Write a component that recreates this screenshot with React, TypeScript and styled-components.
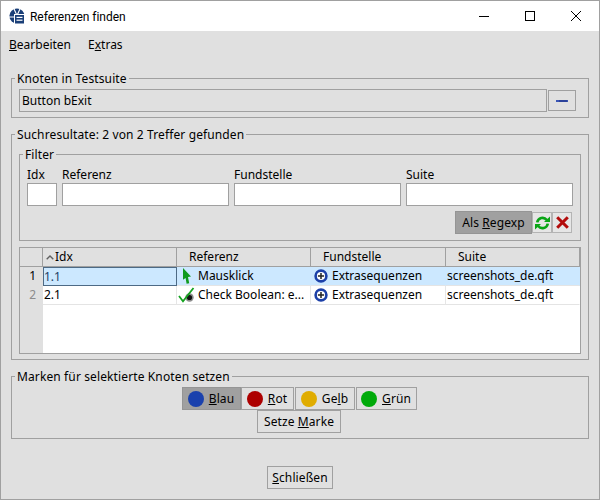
import React from "react";
import styled, { createGlobalStyle } from "styled-components";

const Global = createGlobalStyle`
  html, body { margin: 0; padding: 0; background: #e0e0e0; }
  * { box-sizing: border-box; }
  body { font-family: "Noto Sans", "Open Sans", sans-serif; font-size: 12px; color: #000; }
`;

const Window = styled.div`
  width: 600px;
  height: 500px;
  border: 1px solid #a0a0a0;
  background: #e0e0e0;
  display: flex;
  flex-direction: column;
  overflow: hidden;
`;
const TitleBar = styled.div`
  height: 30px;
  flex: none;
  background: #fff;
  display: flex;
  align-items: center;
  padding-left: 8px;
`;
const TitleText = styled.span`
  margin-left: 5px;
  flex: 1;
  line-height: 16px;
  margin-top: 1px;
  font-family: Roboto, "Noto Sans", sans-serif;
  font-size: 12px;
  letter-spacing: -0.05px;
`;
const WinButton = styled.div`
  width: 46px;
  height: 30px;
  display: flex;
  align-items: center;
  justify-content: center;
`;
const MenuBar = styled.div`
  height: 27px;
  flex: none;
  display: flex;
  align-items: center;
  gap: 17px;
  padding: 0 0 0 8px;
`;
const MenuItem = styled.span`
  line-height: 16px;
  margin-top: 1px;
`;
const Group = styled.fieldset<{ $mt: number; $pb: number; $pr: number; $nested?: boolean }>`
  margin: ${(p) => p.$mt}px ${(p) => (p.$nested ? 0 : 10)}px 0;
  min-width: 0;
  padding: 1px ${(p) => p.$pr}px ${(p) => p.$pb}px 7px;
  border: 1px solid #a0a0a0;
  flex: none;
`;
const Legend = styled.legend`
  margin-left: -4px;
  padding: 0 2px;
  height: 19px;
  line-height: 19px;
  letter-spacing: 0.12px;
`;
const NodeRow = styled.div`
  display: flex;
  align-items: center;
  gap: 1px;
`;
const NodeField = styled.div`
  flex: 1;
  height: 23px;
  border: 1px solid #a0a0a0;
  padding-left: 2px;
  line-height: 21px;
`;
const SmallButton = styled.div`
  width: 28px;
  height: 21px;
  border: 1px solid #a0a0a0;
  display: flex;
  align-items: center;
  justify-content: center;
`;
const FilterGrid = styled.div`
  display: grid;
  grid-template-columns: 30px 167px 167px 167px;
  grid-template-rows: 18px 23px;
  column-gap: 5px;
`;
const FieldLabel = styled.label`
  line-height: 20px;
`;
const TextInput = styled.div`
  border: 1px solid #a0a0a0;
  background: #fff;
`;
const FilterActions = styled.div`
  display: flex;
  justify-content: flex-end;
  align-items: center;
  margin: 5px 1px 0 0;
  height: 23px;
`;
const Toggle = styled.div<{ $w: number; $on?: boolean; $ml?: number }>`
  width: ${(p) => p.$w}px;
  height: 23px;
  flex: none;
  margin-left: ${(p) => p.$ml ?? 0}px;
  border: 1px solid ${(p) => (p.$on ? "#959595" : "#a0a0a0")};
  background: ${(p) => (p.$on ? "#a0a0a0" : "#e0e0e0")};
  display: flex;
  align-items: center;
  justify-content: center;
  gap: 5px;
  line-height: 16px;
  letter-spacing: 0.1px;
`;
const IconButton = styled.div`
  width: 20px;
  height: 21px;
  border: 1px solid #b4b4b4;
  background: #e6e6e6;
  display: flex;
  align-items: center;
  justify-content: center;
`;
const Table = styled.div`
  margin-top: 6px;
  height: 107px;
  border: 1px solid #a0a0a0;
  background: #fff;
  display: flex;
  flex-direction: column;
`;
const Row = styled.div<{ $h: number; $sel?: boolean; $grow?: boolean }>`
  display: grid;
  grid-template-columns: 23px 134px 134px 135px 1fr;
  height: ${(p) => p.$h}px;
  flex: ${(p) => (p.$grow ? 1 : "none")};
  background: ${(p) => (p.$sel ? "#cce8ff" : "#fff")};
`;
const HeadCell = styled.div<{ $pl: number }>`
  background: #e0e0e0;
  border-right: 1px solid #a0a0a0;
  border-bottom: 1px solid #a0a0a0;
  padding-left: ${(p) => p.$pl}px;
  display: flex;
  align-items: center;
  gap: 1px;
  line-height: 16px;
`;
const RowHead = styled.div<{ $dim?: boolean }>`
  background: #e0e0e0;
  color: ${(p) => (p.$dim ? "#8c8c8c" : "#000")};
  text-align: right;
  padding-right: 7px;
  line-height: 18px;
`;
const Cell = styled.div<{ $sep?: boolean }>`
  display: flex;
  align-items: center;
  gap: 3px;
  padding-left: 1px;
  line-height: 16px;
  white-space: nowrap;
  overflow: hidden;
  border-right: 1px solid ${(p) => (p.$sep ? "#e6e6e6" : "transparent")};
  border-bottom: 1px solid #e4e4e4;
`;
const ActiveCell = styled(Cell)`
  border: 1px solid #4d6a85;
  padding-left: 0;
  color: #1c3f66;
`;
const CellIcon = styled.span`
  width: 17px;
  height: 16px;
  flex: none;
  display: flex;
  align-items: center;
  justify-content: center;
`;
const MarkRow = styled.div`
  display: flex;
  justify-content: center;
`;
const Dot = styled.span<{ $c: string }>`
  width: 16px;
  height: 16px;
  border-radius: 50%;
  background: ${(p) => p.$c};
  flex: none;
`;
const Footer = styled.div`
  margin-top: 27px;
  display: flex;
  justify-content: center;
`;

const Logo = () => (
  <svg width="16" height="16" viewBox="0 0 16 16">
    <circle cx="8" cy="8" r="7.6" fill="#1a3f78" />
    <path d="M8 7.5L4.6 0M8 7.5L11.4 0M5.5 9H0" stroke="#fff" strokeWidth="1.1" fill="none" />
    <rect x="5.5" y="6.5" width="10" height="9.5" fill="#1a3f78" stroke="#fff" />
    <rect x="7.5" y="8.8" width="6" height="1.2" fill="#fff" />
    <rect x="7.5" y="11.6" width="6" height="1.2" fill="#fff" />
  </svg>
);
const MinIcon = () => (
  <svg width="10" height="10" viewBox="0 0 10 10"><path d="M0 5.5h10" stroke="#000" fill="none" /></svg>
);
const MaxIcon = () => (
  <svg width="10" height="10" viewBox="0 0 10 10"><rect x=".5" y=".5" width="9" height="9" stroke="#000" fill="none" /></svg>
);
const CloseIcon = () => (
  <svg width="10" height="10" viewBox="0 0 10 10"><path d="M0 0l10 10M10 0L0 10" stroke="#000" fill="none" /></svg>
);
const Remove = () => (
  <svg width="12" height="4" viewBox="0 0 12 4"><rect y="1" width="12" height="2" fill="#3a55b5" /><rect x="3" y="1.5" width="8" height="1" fill="#1c2f80" /></svg>
);
const Refresh = () => (
  <svg width="15" height="14" viewBox="0 0 15 14" fill="none">
    <path d="M2.2 6.4a5.4 5.4 0 0 1 9.6-2.4" stroke="#0aa516" strokeWidth="2.6" />
    <path d="M9 6h6V.4z" fill="#0aa516" />
    <path d="M12.8 7.6a5.4 5.4 0 0 1-9.6 2.4" stroke="#0aa516" strokeWidth="2.6" />
    <path d="M6 8H0v5.6z" fill="#0aa516" />
  </svg>
);
const Cross = () => (
  <svg width="13" height="13" viewBox="0 0 13 13"><path d="M1.2 1.2l10.6 10.6M11.8 1.2L1.2 11.8" stroke="#b30c0c" strokeWidth="3" fill="none" /></svg>
);
const SortUp = () => (
  <svg width="8" height="5" viewBox="0 0 8 5"><path d="M.7 4.3L4 1l3.3 3.3" stroke="#606060" strokeWidth="1.4" fill="none" /></svg>
);
const Pointer = () => (
  <svg width="10" height="16" viewBox="0 0 10 16"><path d="M1 0l8 8.6-3 .3 1.2 6.3-2.6.6L3.6 10 1 11.8z" fill="#109a1e" /></svg>
);
const CheckBall = () => (
  <svg width="17" height="16" viewBox="0 0 17 16">
    <circle cx="11.5" cy="10.5" r="4.2" fill="#8e8e8e" />
    <circle cx="11.5" cy="10.5" r="2.6" fill="#111" />
    <path d="M1 9l4 5.2L15.5 1" stroke="#14a31f" strokeWidth="1.8" fill="none" />
  </svg>
);
const PlusCircle = () => (
  <svg width="14" height="14" viewBox="0 0 14 14">
    <circle cx="7" cy="7" r="5.4" fill="#fff" stroke="#1c40a8" strokeWidth="2.6" />
    <path d="M3.9 7h6.2M7 3.9v6.2" stroke="#222" strokeWidth="1.5" />
  </svg>
);

const rows = [
  { n: "1", idx: "1.1", sel: true },
  { n: "2", idx: "2.1", sel: false },
];

export default function App() {
  return (
    <Window>
      <Global />
      <TitleBar>
        <Logo />
        <TitleText>Referenzen finden</TitleText>
        <WinButton><MinIcon /></WinButton>
        <WinButton><MaxIcon /></WinButton>
        <WinButton><CloseIcon /></WinButton>
      </TitleBar>
      <MenuBar>
        <MenuItem><u>B</u>earbeiten</MenuItem>
        <MenuItem>E<u>x</u>tras</MenuItem>
      </MenuBar>

      <Group $mt={11} $pb={5} $pr={12}>
        <Legend>Knoten in Testsuite</Legend>
        <NodeRow>
          <NodeField>Button bExit</NodeField>
          <SmallButton><Remove /></SmallButton>
        </NodeRow>
      </Group>

      <Group $mt={7} $pb={5} $pr={7}>
        <Legend>Suchresultate: 2 von 2 Treffer gefunden</Legend>
        <Group $mt={0} $pb={6} $pr={7} $nested>
          <Legend>Filter</Legend>
          <FilterGrid>
            <FieldLabel>Idx</FieldLabel>
            <FieldLabel>Referenz</FieldLabel>
            <FieldLabel>Fundstelle</FieldLabel>
            <FieldLabel>Suite</FieldLabel>
            <TextInput />
            <TextInput />
            <TextInput />
            <TextInput />
          </FilterGrid>
          <FilterActions>
            <Toggle $w={77} $on>
              <span>Als <u>R</u>egexp</span>
            </Toggle>
            <IconButton><Refresh /></IconButton>
            <IconButton><Cross /></IconButton>
          </FilterActions>
        </Group>
        <Table>
          <Row $h={19}>
            <HeadCell $pl={0} />
            <HeadCell $pl={3}><SortUp /><span>Idx</span></HeadCell>
            <HeadCell $pl={12}>Referenz</HeadCell>
            <HeadCell $pl={12}>Fundstelle</HeadCell>
            <HeadCell $pl={12}>Suite</HeadCell>
          </Row>
          {rows.map((r) => (
            <Row key={r.n} $h={19} $sel={r.sel}>
              <RowHead $dim={!r.sel}>{r.n}</RowHead>
              {r.sel ? <ActiveCell>{r.idx}</ActiveCell> : <Cell $sep>{r.idx}</Cell>}
              <Cell $sep={!r.sel}>
                <CellIcon>{r.sel ? <Pointer /> : <CheckBall />}</CellIcon>
                <span>{r.sel ? "Mausklick" : "Check Boolean: e..."}</span>
              </Cell>
              <Cell $sep={!r.sel}>
                <CellIcon><PlusCircle /></CellIcon>
                <span>Extrasequenzen</span>
              </Cell>
              <Cell>screenshots_de.qft</Cell>
            </Row>
          ))}
          <Row $h={0} $grow>
            <RowHead />
          </Row>
        </Table>
      </Group>

      <Group $mt={7} $pb={5} $pr={9}>
        <Legend>Marken für selektierte Knoten setzen</Legend>
        <MarkRow>
          <Toggle $w={59} $on><Dot $c="#1a41ad" /><span><u>B</u>lau</span></Toggle>
          <Toggle $w={53}><Dot $c="#ad0000" /><span><u>R</u>ot</span></Toggle>
          <Toggle $w={60} $ml={1}><Dot $c="#e0ac00" /><span>Ge<u>l</u>b</span></Toggle>
          <Toggle $w={61} $ml={1}><Dot $c="#00aa0a" /><span><u>G</u>rün</span></Toggle>
        </MarkRow>
        <MarkRow>
          <Toggle $w={84}><span>Setze <u>M</u>arke</span></Toggle>
        </MarkRow>
      </Group>

      <Footer>
        <Toggle $w={66}><span><u>S</u>chließen</span></Toggle>
      </Footer>
    </Window>
  );
}
